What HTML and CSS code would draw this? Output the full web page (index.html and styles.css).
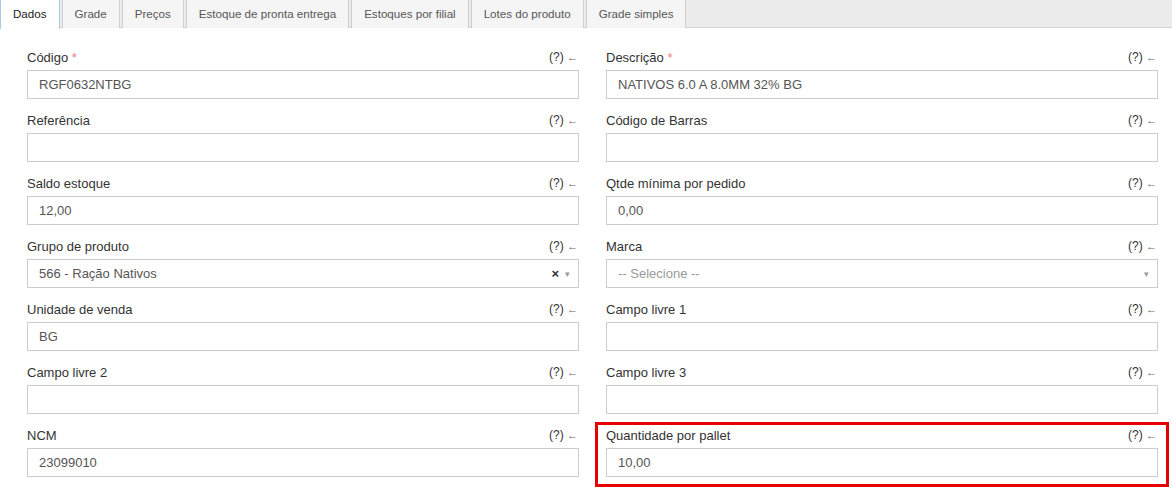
FILE: index.html
```html
<!DOCTYPE html>
<html>
<head>
    <title>Produto</title>
    <meta name="viewport" content="width=device-width, initial-scale=1.0">
    <link rel="stylesheet" href="styles.css">
</head>
<body>
    <ul class="tabs">
        <li class="tab active">Dados</li>
        <li class="tab">Grade</li>
        <li class="tab">Preços</li>
        <li class="tab">Estoque de pronta entrega</li>
        <li class="tab">Estoques por filial</li>
        <li class="tab">Lotes do produto</li>
        <li class="tab">Grade simples</li>
    </ul>

    <form class="form">
        <div class="field">
            <div class="field-head">
                <label>Código <span class="req">*</span></label>
                <span class="help">(?) <span class="arrow">&larr;</span></span>
            </div>
            <div class="input">RGF0632NTBG</div>
        </div>
        <div class="field">
            <div class="field-head">
                <label>Descrição <span class="req">*</span></label>
                <span class="help">(?) <span class="arrow">&larr;</span></span>
            </div>
            <div class="input">NATIVOS 6.0 A 8.0MM 32% BG</div>
        </div>

        <div class="field">
            <div class="field-head">
                <label>Referência</label>
                <span class="help">(?) <span class="arrow">&larr;</span></span>
            </div>
            <div class="input"></div>
        </div>
        <div class="field">
            <div class="field-head">
                <label>Código de Barras</label>
                <span class="help">(?) <span class="arrow">&larr;</span></span>
            </div>
            <div class="input"></div>
        </div>

        <div class="field">
            <div class="field-head">
                <label>Saldo estoque</label>
                <span class="help">(?) <span class="arrow">&larr;</span></span>
            </div>
            <div class="input">12,00</div>
        </div>
        <div class="field">
            <div class="field-head">
                <label>Qtde mínima por pedido</label>
                <span class="help">(?) <span class="arrow">&larr;</span></span>
            </div>
            <div class="input">0,00</div>
        </div>

        <div class="field">
            <div class="field-head">
                <label>Grupo de produto</label>
                <span class="help">(?) <span class="arrow">&larr;</span></span>
            </div>
            <div class="input select">
                <span class="select-value">566 - Ração Nativos</span>
                <span class="select-clear">&times;</span>
                <span class="select-caret">&#9662;</span>
            </div>
        </div>
        <div class="field">
            <div class="field-head">
                <label>Marca</label>
                <span class="help">(?) <span class="arrow">&larr;</span></span>
            </div>
            <div class="input select">
                <span class="select-value placeholder">-- Selecione --</span>
                <span class="select-caret">&#9662;</span>
            </div>
        </div>

        <div class="field">
            <div class="field-head">
                <label>Unidade de venda</label>
                <span class="help">(?) <span class="arrow">&larr;</span></span>
            </div>
            <div class="input">BG</div>
        </div>
        <div class="field">
            <div class="field-head">
                <label>Campo livre 1</label>
                <span class="help">(?) <span class="arrow">&larr;</span></span>
            </div>
            <div class="input"></div>
        </div>

        <div class="field">
            <div class="field-head">
                <label>Campo livre 2</label>
                <span class="help">(?) <span class="arrow">&larr;</span></span>
            </div>
            <div class="input"></div>
        </div>
        <div class="field">
            <div class="field-head">
                <label>Campo livre 3</label>
                <span class="help">(?) <span class="arrow">&larr;</span></span>
            </div>
            <div class="input"></div>
        </div>

        <div class="field">
            <div class="field-head">
                <label>NCM</label>
                <span class="help">(?) <span class="arrow">&larr;</span></span>
            </div>
            <div class="input">23099010</div>
        </div>
        <div class="field highlight">
            <div class="field-head">
                <label>Quantidade por pallet</label>
                <span class="help">(?) <span class="arrow">&larr;</span></span>
            </div>
            <div class="input">10,00</div>
        </div>
    </form>
</body>
</html>
```

FILE: styles.css
```css
body {
    font-family: "Liberation Sans", Arial, sans-serif;
    font-size: 13px;
    color: #333;
    background-color: #fff;
    margin: 0;
}

/* Tab strip */
.tabs {
    display: flex;
    gap: 2px;
    list-style: none;
    margin: 0;
    padding: 0;
    height: 27px;
    background-color: #ebebeb;
    border-bottom: 1px solid #d4d4d4;
}

.tab {
    height: 28px;
    line-height: 28px;
    padding: 0 12px;
    margin-top: -1px;
    font-size: 11.6px;
    background-color: #f5f5f5;
    border: 1px solid #cfcfcf;
    border-bottom: none;
    color: #555;
}

.tab.active {
    background-color: #fff;
    color: #222;
    border-color: #a9c9e6;
    height: 29px;
}

/* Form grid */
.form {
    display: grid;
    grid-template-columns: 1fr 1fr;
    column-gap: 27px;
    row-gap: 13px;
    padding: 21px 14px 11px 27px;
}

.field {
    position: relative;
}

.field-head {
    display: flex;
    justify-content: space-between;
    align-items: center;
    height: 16px;
    margin-bottom: 5px;
}

.req {
    color: #f07f7f;
}

.help {
    color: #333;
    margin-right: 1px;
    font-size: 12px;
}

.help .arrow {
    color: #666;
    font-size: 11px;
}

.input {
    display: flex;
    align-items: center;
    height: 29px;
    box-sizing: border-box;
    padding: 0 11px;
    border: 1px solid #ccc;
    color: #555;
}

.select-value {
    flex: 1;
}

.placeholder {
    color: #999;
}

.select-clear {
    color: #333;
    font-size: 13px;
    font-weight: bold;
    margin-right: 6px;
}

.select-caret {
    color: #999;
    font-size: 9px;
    margin-right: -3px;
}

/* Outline drawn around the highlighted field */
.highlight::after {
    content: "";
    position: absolute;
    left: -11px;
    right: -11px;
    top: -5px;
    bottom: -10px;
    border: 3px solid #e60000;
}
```
